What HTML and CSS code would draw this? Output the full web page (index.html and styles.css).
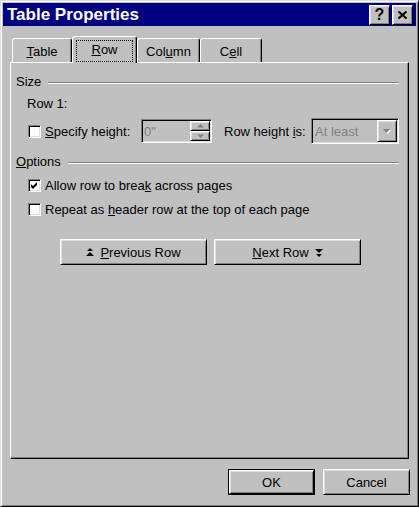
FILE: index.html
```html
<!DOCTYPE html>
<html lang="en">
<head>
    <meta charset="UTF-8">
    <title>Table Properties</title>
    <link rel="stylesheet" href="styles.css">
</head>
<body>
    <div class="window">
        <div class="titlebar">
            <span class="title">Table Properties</span>
            <div class="title-buttons">
                <button class="title-btn raised">?</button>
                <button class="title-btn raised">
                    <svg width="9" height="8" viewBox="0 0 9 8"><path d="M0.5 0.5 L8.5 7.5 M8.5 0.5 L0.5 7.5" stroke="#000" stroke-width="2"/></svg>
                </button>
            </div>
        </div>

        <div class="dialog-body">
            <div class="tabs">
                <div class="tab tab-table"><u>T</u>able</div>
                <div class="tab tab-row active"><span class="focus"><u>R</u>ow</span></div>
                <div class="tab tab-column">Col<u>u</u>mn</div>
                <div class="tab tab-cell">C<u>e</u>ll</div>
            </div>

            <div class="panel">
                <div class="group-head">
                    <span>Size</span>
                    <div class="etch"></div>
                </div>
                <div class="row-label">Row 1:</div>
                <div class="spec-row">
                    <label class="check spec-check">
                        <span class="box sunken"></span>
                        <span><u>S</u>pecify height:</span>
                    </label>
                    <div class="field sunken">
                        <span class="disabled-text">0"</span>
                        <div class="spinner">
                            <div class="spin-btn raised">
                                <svg width="7" height="4" viewBox="0 0 7 4"><polygon points="3.5,0 0,3.5 7,3.5" fill="#808080"/></svg>
                            </div>
                            <div class="spin-btn raised">
                                <svg width="7" height="4" viewBox="0 0 7 4"><polygon points="0,0.5 7,0.5 3.5,4" fill="#808080"/></svg>
                            </div>
                        </div>
                    </div>
                    <span class="height-label">Row height <u>i</u>s:</span>
                    <div class="select sunken">
                        <span class="disabled-text">At least</span>
                        <div class="select-btn raised">
                            <svg width="9" height="6" viewBox="0 0 9 6">
                                <polygon points="1,1 8,1 4.5,5" fill="#fff"/>
                                <polygon points="0,0 7,0 3.5,4" fill="#808080"/>
                            </svg>
                        </div>
                    </div>
                </div>

                <div class="group-head options-head">
                    <span><u>O</u>ptions</span>
                    <div class="etch"></div>
                </div>
                <label class="check option">
                    <span class="box sunken">
                        <svg width="7" height="7" viewBox="0 0 7 7"><polygon points="0,2 2,4 6,0 6,3 2,7 0,5" fill="#000"/></svg>
                    </span>
                    <span>Allow row to brea<u>k</u> across pages</span>
                </label>
                <label class="check option">
                    <span class="box sunken"></span>
                    <span>Repeat as <u>h</u>eader row at the top of each page</span>
                </label>

                <div class="nav-buttons">
                    <button class="btn raised nav-btn">
                        <svg width="8" height="9" viewBox="0 0 8 9">
                            <polygon points="4,0 1,3 7,3" fill="#000"/>
                            <polygon points="4,4 0,8 8,8" fill="#000"/>
                        </svg>
                        <span><u>P</u>revious Row</span>
                    </button>
                    <button class="btn raised nav-btn">
                        <span><u>N</u>ext Row</span>
                        <svg width="8" height="9" viewBox="0 0 8 9">
                            <polygon points="0,1 8,1 4,5" fill="#000"/>
                            <polygon points="1,6 7,6 4,9" fill="#000"/>
                        </svg>
                    </button>
                </div>
            </div>

            <div class="footer">
                <div class="default-frame">
                    <button class="btn raised dialog-btn">OK</button>
                </div>
                <button class="btn raised dialog-btn">Cancel</button>
            </div>
        </div>
    </div>
</body>
</html>
```

FILE: styles.css
```css
* {
    box-sizing: border-box;
    margin: 0;
    padding: 0;
}

body {
    background-color: #c0c0c0;
    font-family: "Liberation Sans", Arial, sans-serif;
    font-size: 13px;
    line-height: 15px;
    color: #000;
}

/* 3d borders */
.raised {
    background-color: #c0c0c0;
    border: 1px solid;
    border-color: #fff #000 #000 #fff;
    box-shadow: inset 1px 1px #dfdfdf, inset -1px -1px #808080;
}

.sunken {
    border: 1px solid;
    border-color: #808080 #fff #fff #808080;
    box-shadow: inset 1px 1px #000, inset -1px -1px #dfdfdf;
}

.window {
    width: 419px;
    height: 507px;
    background-color: #c0c0c0;
    border: 1px solid;
    border-color: #dfdfdf #000 #000 #dfdfdf;
    box-shadow: inset 1px 1px #fff, inset -1px -1px #808080;
    padding: 2px;
}

.titlebar {
    height: 23px;
    background-color: #000080;
    color: #fff;
    display: flex;
    align-items: center;
    justify-content: space-between;
    padding: 0 3px 0 4px;
}

.title {
    font-weight: bold;
    font-size: 17px;
    line-height: 23px;
}

.title-buttons {
    display: flex;
    gap: 2px;
}

.title-btn {
    width: 21px;
    height: 20px;
    display: flex;
    align-items: center;
    justify-content: center;
    font-family: "Liberation Sans", Arial, sans-serif;
    font-weight: bold;
    font-size: 16px;
    color: #000;
}

.dialog-body {
    padding: 10px 6px 0 7px;
}

/* tabs */
.tabs {
    display: flex;
    align-items: flex-end;
    padding-left: 2px;
    height: 26px;
}

.tab {
    height: 24px;
    padding-top: 5px;
    text-align: center;
    border: 1px solid;
    border-bottom: none;
    border-color: #fff #000 transparent #fff;
    border-radius: 3px 3px 0 0;
    box-shadow: inset -1px 0 #808080;
    background-color: #c0c0c0;
}

.tab-table { width: 60px; }
.tab-column { width: 63px; }
.tab-cell { width: 62px; }

.tab.active {
    width: 65px;
    height: 27px;
    margin-bottom: -1px;
    padding: 3px 3px 0 3px;
    position: relative;
    z-index: 1;
}

.focus {
    display: block;
    height: 22px;
    width: 57px;
    padding-top: 1px;
    border: 1px dotted #000;
}

.panel {
    width: 399px;
    height: 397px;
    border: 1px solid;
    border-color: #fff #000 #000 #fff;
    box-shadow: inset -1px -1px #808080;
    padding: 0 9px 0 5px;
    display: flex;
    flex-direction: column;
}

.group-head {
    display: flex;
    margin-top: 11px;
    height: 15px;
}

.options-head {
    margin-top: 10px;
}

.etch {
    flex: 1;
    height: 2px;
    margin: 8px 0 0 7px;
    border-top: 1px solid #808080;
    border-bottom: 1px solid #fff;
}

.row-label {
    margin: 7px 0 0 11px;
}

.spec-row {
    display: flex;
    align-items: center;
    height: 26px;
    margin-top: 7px;
}

.check {
    display: flex;
    align-items: center;
    gap: 4px;
    margin-left: 12px;
}

.spec-check {
    width: 113px;
    flex-shrink: 0;
}

.option {
    height: 15px;
    margin-top: 9px;
}

.box {
    width: 13px;
    height: 13px;
    background-color: #fff;
    display: flex;
    align-items: center;
    justify-content: center;
}

.field {
    width: 71px;
    height: 24px;
    flex-shrink: 0;
    display: flex;
    align-items: center;
    justify-content: space-between;
    padding: 1px 1px 1px 2px;
}

.disabled-text {
    color: #808080;
}

.spinner {
    display: flex;
    flex-direction: column;
    width: 20px;
    height: 20px;
}

.spin-btn {
    height: 10px;
    display: flex;
    align-items: center;
    justify-content: center;
}

.height-label {
    margin-left: 12px;
    width: 87px;
    flex-shrink: 0;
}

.select {
    width: 88px;
    height: 26px;
    flex-shrink: 0;
    display: flex;
    align-items: center;
    justify-content: space-between;
    padding: 1px 1px 1px 3px;
}

.select-btn {
    width: 20px;
    height: 22px;
    display: flex;
    align-items: center;
    justify-content: center;
    padding-top: 1px;
}

/* buttons */
.btn {
    font-family: "Liberation Sans", Arial, sans-serif;
    font-size: 13px;
    color: #000;
    display: flex;
    align-items: center;
    justify-content: center;
}

.nav-buttons {
    display: flex;
    gap: 7px;
    margin: 22px 0 0 44px;
}

.nav-btn {
    width: 147px;
    height: 26px;
    gap: 6px;
}

.footer {
    display: flex;
    justify-content: flex-end;
    gap: 8px;
    margin-top: 10px;
}

.default-frame {
    border: 1px solid #000;
}

.default-frame .dialog-btn {
    width: 85px;
    height: 24px;
}

.dialog-btn {
    width: 87px;
    height: 26px;
}
```
